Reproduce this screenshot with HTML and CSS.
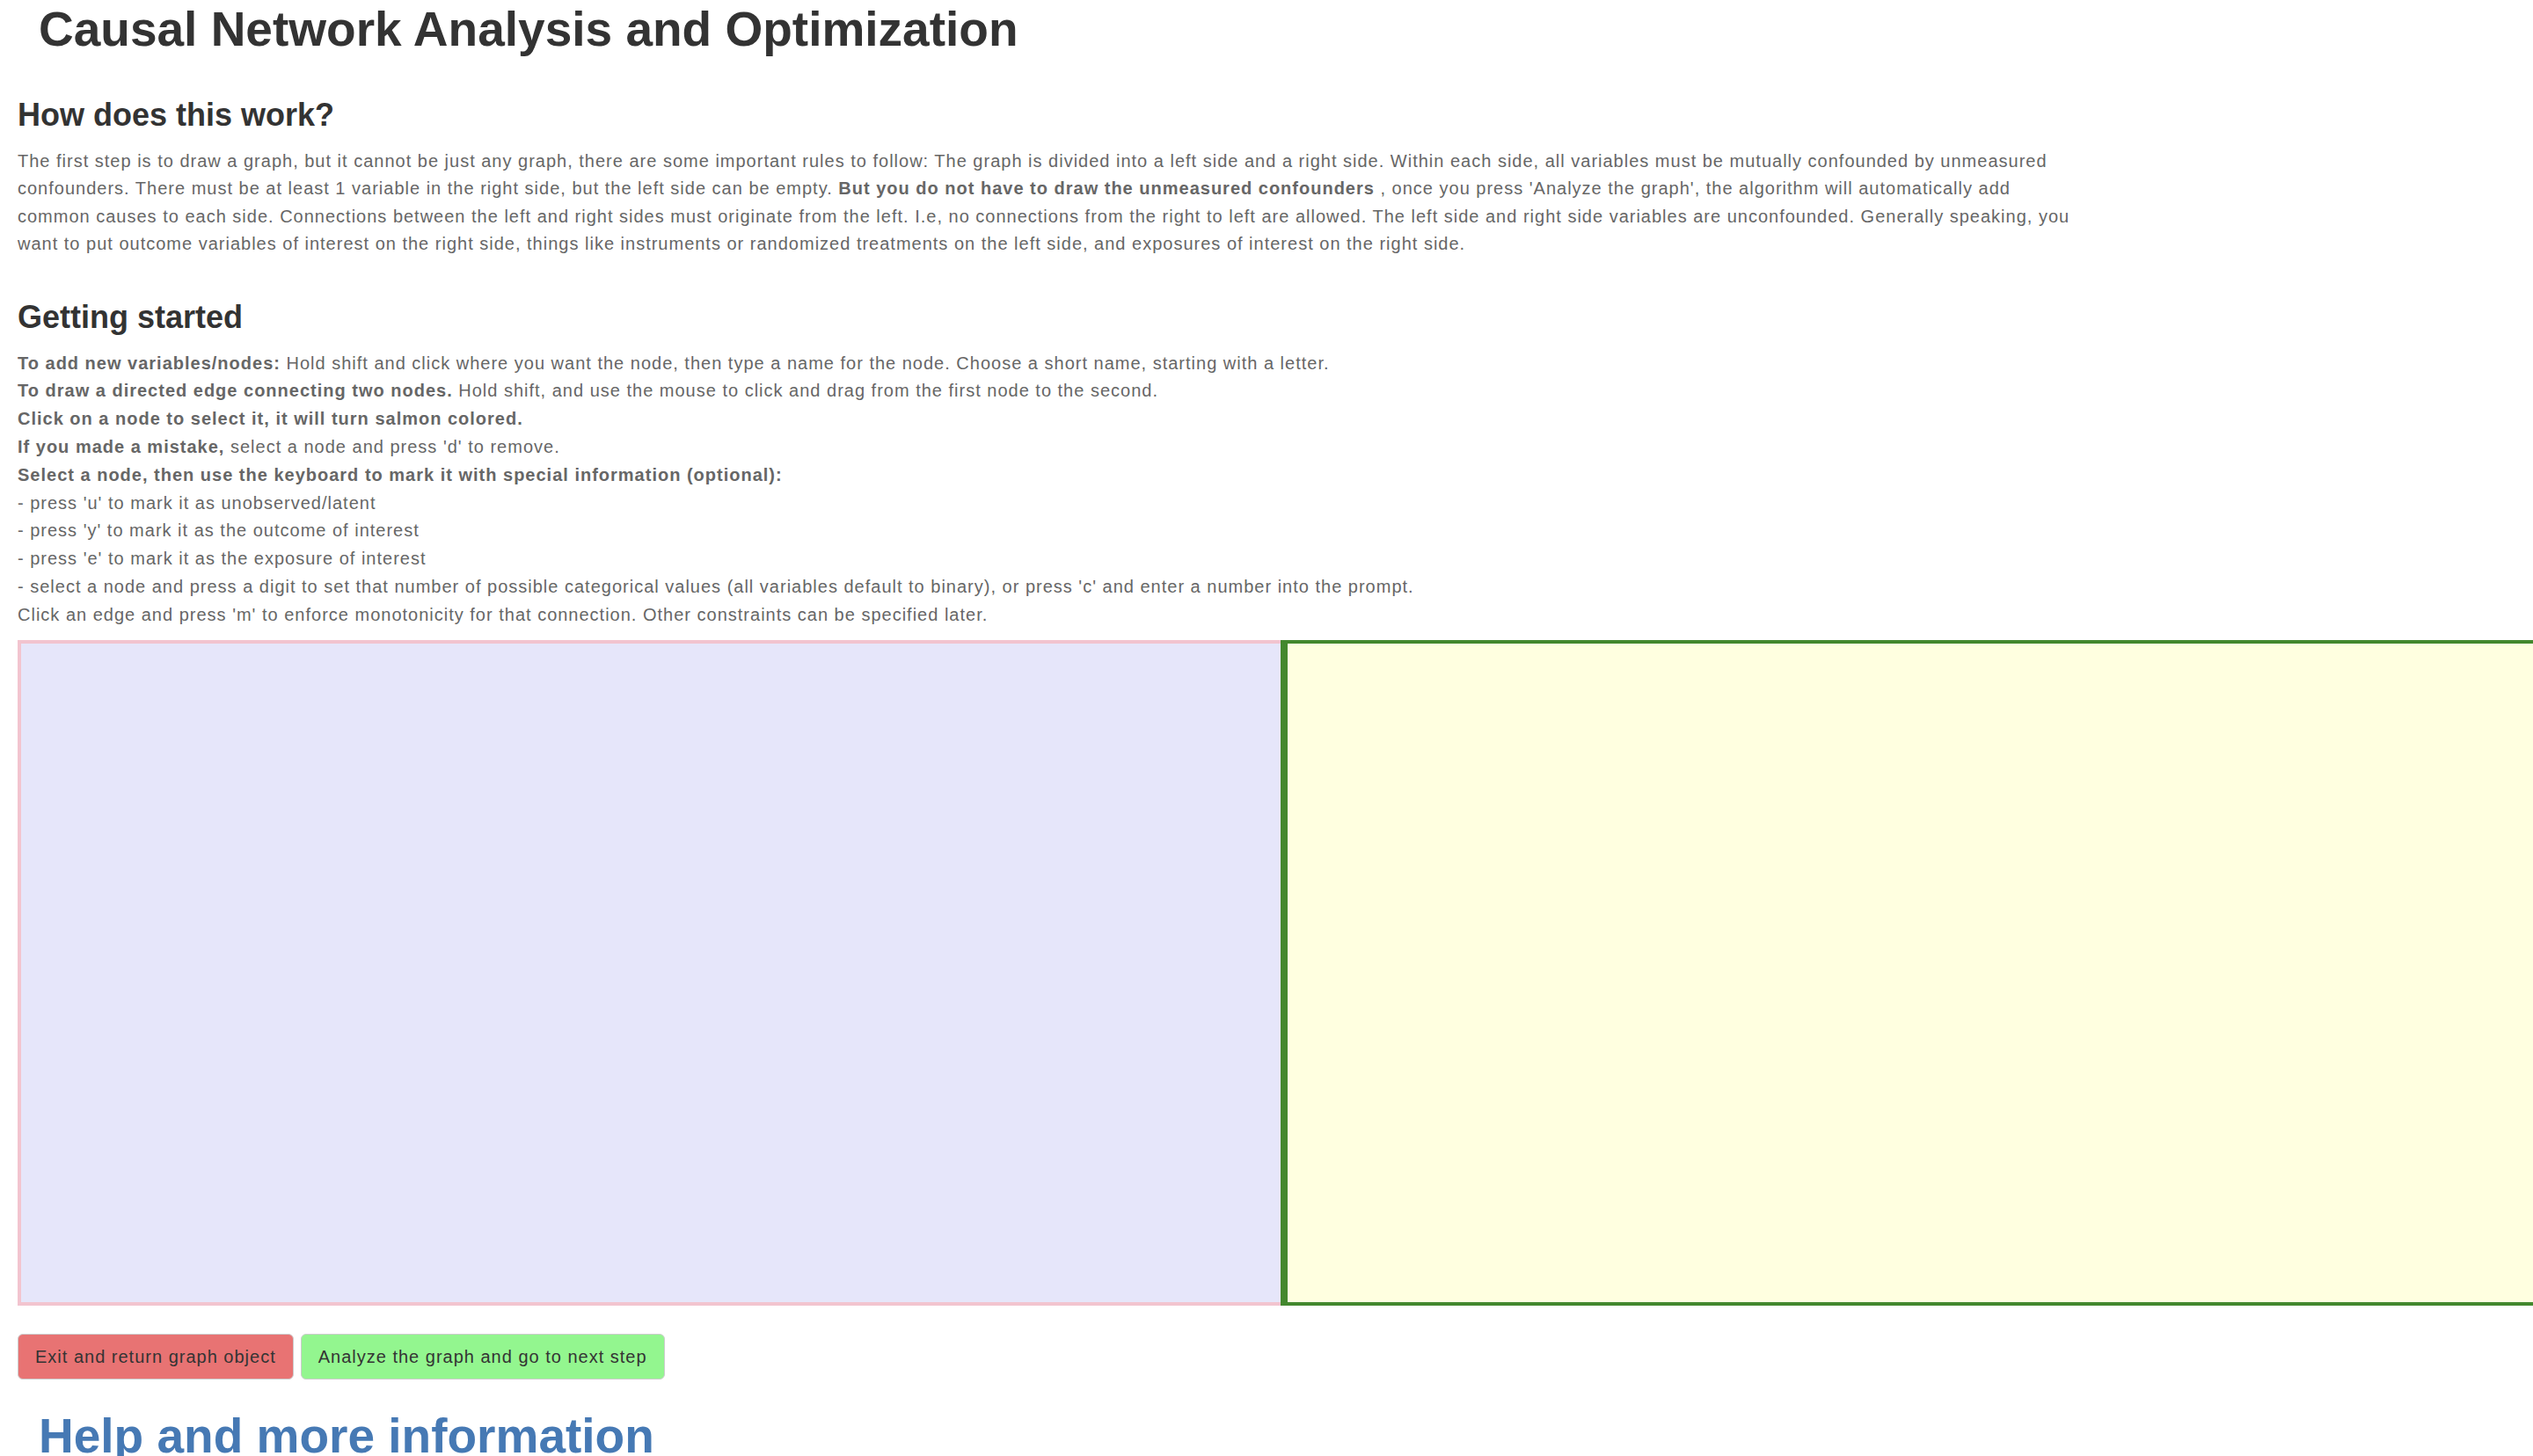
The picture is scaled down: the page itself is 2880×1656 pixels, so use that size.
FILE: index.html
```html
<!DOCTYPE html>
<html lang="en">
<head>
    <meta charset="UTF-8">
    <title>Causal Network Analysis and Optimization</title>
    <link rel="stylesheet" href="styles.css">
</head>
<body>
    <div class="page">
        <h1 class="title">Causal Network Analysis and Optimization</h1>

        <h3>How does this work?</h3>
        <p class="intro">The first step is to draw a graph, but it cannot be just any graph, there are some important rules to follow: The graph is divided into a left side and a right side. Within each side, all variables must be mutually confounded by unmeasured confounders. There must be at least 1 variable in the right side, but the left side can be empty. <b>But you do not have to draw the unmeasured confounders</b> , once you press 'Analyze the graph', the algorithm will automatically add common causes to each side. Connections between the left and right sides must originate from the left. I.e, no connections from the right to left are allowed. The left side and right side variables are unconfounded. Generally speaking, you want to put outcome variables of interest on the right side, things like instruments or randomized treatments on the left side, and exposures of interest on the right side.</p>

        <h3>Getting started</h3>
        <div class="steps">
            <b>To add new variables/nodes:</b> Hold shift and click where you want the node, then type a name for the node. Choose a short name, starting with a letter.<br>
            <b>To draw a directed edge connecting two nodes.</b> Hold shift, and use the mouse to click and drag from the first node to the second.<br>
            <b>Click on a node to select it, it will turn salmon colored.</b><br>
            <b>If you made a mistake,</b> select a node and press 'd' to remove.<br>
            <b>Select a node, then use the keyboard to mark it with special information (optional):</b><br>
            - press 'u' to mark it as unobserved/latent<br>
            - press 'y' to mark it as the outcome of interest<br>
            - press 'e' to mark it as the exposure of interest<br>
            - select a node and press a digit to set that number of possible categorical values (all variables default to binary), or press 'c' and enter a number into the prompt.<br>
            Click an edge and press 'm' to enforce monotonicity for that connection. Other constraints can be specified later.
        </div>

        <svg class="graph" width="2900" height="757">
            <rect class="side-left" x="0" y="0" width="1440" height="757"></rect>
            <rect class="side-right" x="1440" y="0" width="1460" height="757"></rect>
        </svg>

        <div class="actions">
            <button class="btn btn-exit">Exit and return graph object</button>
            <button class="btn btn-analyze">Analyze the graph and go to next step</button>
        </div>

        <h1 class="help">Help and more information</h1>
    </div>
</body>
</html>
```

FILE: styles.css
```css
html, body {
    overflow: hidden;
}

body {
    margin: 0;
    font-family: "Liberation Sans", Arial, sans-serif;
    font-size: 20px;
    line-height: 31.5px;
    letter-spacing: 1px;
    color: #666;
    background: #fff;
}

.page {
    padding-left: 20px;
}

h1, h3 {
    color: #333;
    font-weight: bold;
    line-height: 1.1;
    letter-spacing: 0;
    margin: 0;
}

h1 {
    font-size: 55px;
    padding-left: 24px;
}

.title {
    margin-top: 3px;
    margin-bottom: 4px;
}

h3 {
    font-size: 36px;
    margin-top: 47px;
    margin-bottom: 17.5px;
}

.intro {
    margin: 0;
    max-width: 2350px;
}

.steps {
    line-height: 31.8px;
}

.graph {
    display: block;
    margin-top: 12px;
}

.graph rect {
    stroke-width: 8;
}

.side-left {
    fill: lavender;
    stroke: #f2c4cf;
}

.side-right {
    fill: lightyellow;
    stroke: #43882e;
}

.actions {
    display: flex;
    gap: 8px;
    margin-top: 32px;
}

.btn {
    font-family: inherit;
    font-size: 20px;
    line-height: 30px;
    letter-spacing: 1px;
    color: #333;
    padding: 10px 19px;
    border: 1px solid #ccc;
    border-radius: 6px;
    cursor: pointer;
}

.btn-exit {
    background: #e87373;
}

.btn-analyze {
    background: #93f68f;
}

.help {
    color: #4679b4;
    margin-top: 34px;
}
```
